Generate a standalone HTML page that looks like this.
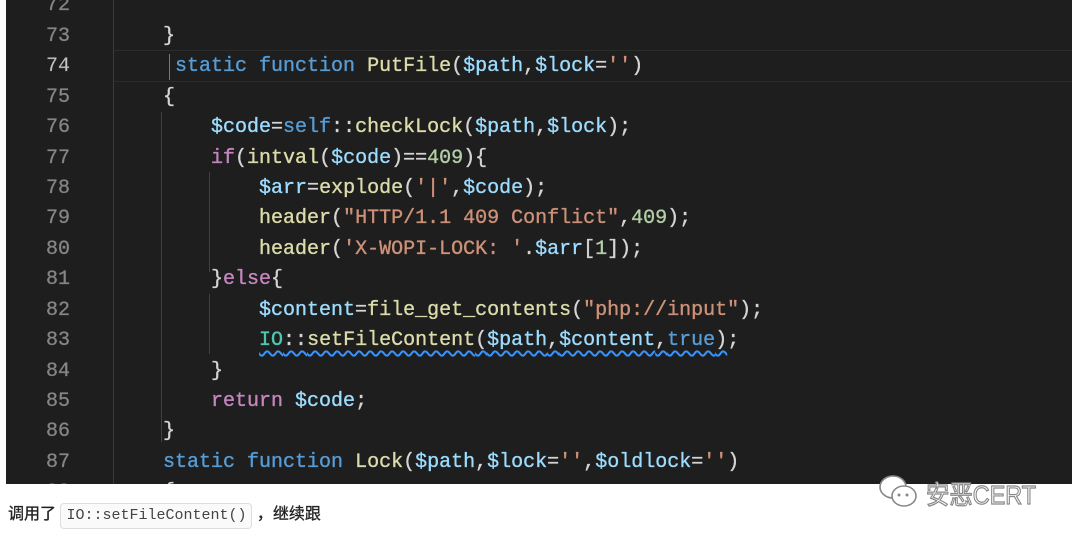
<!DOCTYPE html>
<html><head><meta charset="utf-8"><style>
body{margin:0;width:1080px;height:538px;background:#fff;overflow:hidden;position:relative;font-family:"Liberation Sans","Noto Sans CJK SC",sans-serif}
#ed{position:absolute;left:6px;top:0;width:1066px;height:484px;background:#1e1e1e;overflow:hidden}
.ln{position:absolute;left:0;width:64px;text-align:right;color:#858585;font:20px/30.43px "Liberation Mono",monospace;-webkit-text-stroke:0.3px #858585}
.cd{position:absolute;left:109px;white-space:pre;color:#d4d4d4;font:20px/30.43px "Liberation Mono",monospace;-webkit-text-stroke:0.35px currentColor}
.k{color:#569cd6}.f{color:#dcdcaa}.v{color:#9cdcfe}.s{color:#ce9178}.n{color:#b5cea8}.p{color:#c586c0}.t{color:#4ec9b0}
.g{position:absolute;width:1px;background:#404040}
#hl{position:absolute;left:107px;right:0;top:50px;height:30px;border-top:1px solid #2c2c2c;border-bottom:1px solid #2c2c2c}
</style></head><body>
<div id="ed">
<div id="hl"></div>
<div class="g" style="left:107px;top:0;height:484px;background:#3a3a3a"></div>
<div class="g" style="left:155px;top:112px;height:330px"></div>
<div class="g" style="left:203px;top:172px;height:100px"></div>
<div class="g" style="left:203px;top:294px;height:60px"></div>
<div class="g" style="left:163px;top:54px;height:26px;background:#777"></div>
<div style="position:absolute;top:-8.6px;left:0;width:100%">
<div class="ln" style="top:0">72</div>
<div class="ln" style="top:30.43px">73</div>
<div class="ln" style="top:60.86px;color:#c6c6c6">74</div>
<div class="ln" style="top:91.29px">75</div>
<div class="ln" style="top:121.72px">76</div>
<div class="ln" style="top:152.15px">77</div>
<div class="ln" style="top:182.58px">78</div>
<div class="ln" style="top:213.01px">79</div>
<div class="ln" style="top:243.44px">80</div>
<div class="ln" style="top:273.87px">81</div>
<div class="ln" style="top:304.3px">82</div>
<div class="ln" style="top:334.73px">83</div>
<div class="ln" style="top:365.16px">84</div>
<div class="ln" style="top:395.59px">85</div>
<div class="ln" style="top:426.02px">86</div>
<div class="ln" style="top:456.45px">87</div>
<div class="ln" style="top:486.88px">88</div>
<div class="cd" style="top:30.43px">    }</div>
<div class="cd" style="top:60.86px">     <span class="k">static</span> <span class="k">function</span> <span class="f">PutFile</span>(<span class="v">$path</span>,<span class="v">$lock</span>=<span class="s">''</span>)</div>
<div class="cd" style="top:91.29px">    {</div>
<div class="cd" style="top:121.72px">        <span class="v">$code</span>=<span class="k">self</span>::<span class="f">checkLock</span>(<span class="v">$path</span>,<span class="v">$lock</span>);</div>
<div class="cd" style="top:152.15px">        <span class="p">if</span>(<span class="f">intval</span>(<span class="v">$code</span>)==<span class="n">409</span>){</div>
<div class="cd" style="top:182.58px">            <span class="v">$arr</span>=<span class="f">explode</span>(<span class="s">'|'</span>,<span class="v">$code</span>);</div>
<div class="cd" style="top:213.01px">            <span class="f">header</span>(<span class="s">"HTTP/1.1 409 Conflict"</span>,<span class="n">409</span>);</div>
<div class="cd" style="top:243.44px">            <span class="f">header</span>(<span class="s">'X-WOPI-LOCK: '</span>.<span class="v">$arr</span>[<span class="n">1</span>]);</div>
<div class="cd" style="top:273.87px">        }<span class="p">else</span>{</div>
<div class="cd" style="top:304.3px">            <span class="v">$content</span>=<span class="f">file_get_contents</span>(<span class="s">"php://input"</span>);</div>
<div class="cd" style="top:334.73px">            <span style="text-decoration:underline wavy #3794ff;text-underline-offset:5px"><span class="t">IO</span>::<span class="f">setFileContent</span>(<span class="v">$path</span>,<span class="v">$content</span>,<span class="k">true</span>)</span>;</div>
<div class="cd" style="top:365.16px">        }</div>
<div class="cd" style="top:395.59px">        <span class="p">return</span> <span class="v">$code</span>;</div>
<div class="cd" style="top:426.02px">    }</div>
<div class="cd" style="top:456.45px">    <span class="k">static</span> <span class="k">function</span> <span class="f">Lock</span>(<span class="v">$path</span>,<span class="v">$lock</span>=<span class="s">''</span>,<span class="v">$oldlock</span>=<span class="s">''</span>)</div>
<div class="cd" style="top:486.88px">    {</div>
</div>
</div>
<div style="position:absolute;left:878px;top:474px;width:44px;height:36px">
<svg width="44" height="36" viewBox="0 0 44 36"><ellipse cx="15" cy="13" rx="13" ry="11" fill="#fff" stroke="#888" stroke-width="1.6"/><ellipse cx="26" cy="22" rx="12" ry="10" fill="#fff" stroke="#888" stroke-width="1.6"/><circle cx="21" cy="21" r="1.5" fill="#888"/><circle cx="29" cy="21" r="1.5" fill="#888"/></svg></div>
<div style="position:absolute;left:926px;top:475px;font-size:26px;color:#fff;-webkit-text-stroke:1.2px #888;transform:scaleX(0.9);transform-origin:left">安恶CERT</div>
<div style="position:absolute;left:8px;top:502px;font-size:16px;color:#222;line-height:26px;-webkit-text-stroke:0.3px #222">调用了 <span style="display:inline-block;border:1px solid #ddd;border-radius:4px;padding:0 5px;font:15px/24px 'Liberation Mono',monospace;color:#444;background:#fafafa;-webkit-text-stroke:0">IO::setFileContent()</span> ，继续跟</div>
</body></html>
